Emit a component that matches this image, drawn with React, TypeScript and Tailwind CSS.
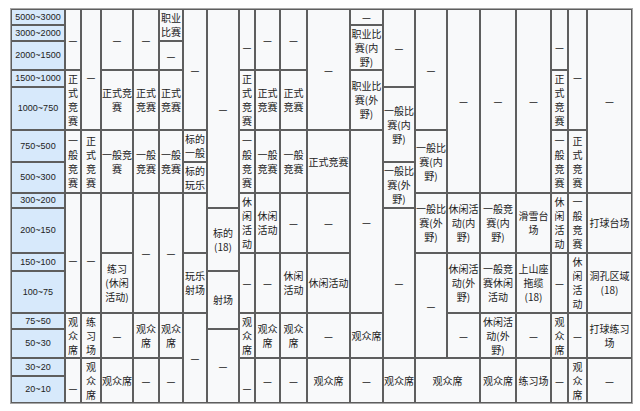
import React from "react";

// one column of the table, top to bottom: [rowSpan, lines, colSpan?]
type Span = { n: number; t: string[]; c?: number; skip?: boolean };

const D = "—";
const v = (s: string) => s.split("");
const s = (n: number, t: string | string[], c?: number): Span => ({
  n,
  t: typeof t === "string" ? [t] : t,
  c,
});
const skip = (n: number): Span => ({ n, t: [], skip: true });

const heads = [
  "5000~3000",
  "3000~2000",
  "2000~1500",
  "1500~1000",
  "1000~750",
  "750~500",
  "500~300",
  "300~200",
  "200~150",
  "150~100",
  "100~75",
  "75~50",
  "50~30",
  "30~20",
  "20~10",
];

const rowH = [
  "h-[16px]",
  "h-[16px]",
  "h-[29px]",
  "h-[17px]",
  "h-[43px]",
  "h-[32px]",
  "h-[31px]",
  "h-[15px]",
  "h-[45px]",
  "h-[18px]",
  "h-[42px]",
  "h-[16px]",
  "h-[29px]",
  "h-[18px]",
  "h-[27px]",
];

const columns: Span[][] = [
  // A
  [s(3, D), s(2, v("正式竞赛")), s(2, v("一般竞赛")), s(4, ["", D]), s(2, v("观众席")), s(2, ["", D])],
  // B
  [s(5, ["", D]), s(2, v("正式竞赛")), s(4, ["", D]), s(2, v("练习场")), s(2, v("观众席"))],
  // C
  [s(3, D), s(2, ["正式竞", "赛"]), s(2, ["一般竞", "赛"]), s(2, ""), s(2, ["练习", "(休闲", "活动)"]), s(2, D), s(2, "观众席")],
  // D
  [s(3, D), s(2, ["正式", "竞赛"]), s(2, ["一般", "竞赛"]), s(4, D), s(2, ["观众", "席"]), s(2, D)],
  // E
  [s(2, ["职业", "比赛"]), s(1, D), s(2, ["正式", "竞赛"]), s(2, ["一般", "竞赛"]), s(4, D), s(2, ["观众", "席"]), s(2, D)],
  // F
  [s(5, D), s(1, ["标的", "一般"]), s(1, ["标的", "玩乐"]), s(2, ""), s(2, ["玩乐", "射场"]), s(4, D)],
  // G
  [s(8, D), s(2, ["标的", "(18)"]), s(2, "射场"), s(3, D)],
  // H
  [s(3, ["", D]), s(2, v("正式竞赛")), s(2, v("一般竞赛")), s(2, v("休闲活动")), s(2, D), s(2, v("观众席")), s(2, ["", D])],
  // I
  [s(3, D), s(2, ["正式", "竞赛"]), s(2, ["一般", "竞赛"]), s(2, ["休闲", "活动"]), s(2, D), s(2, ["观众", "席"]), s(2, D)],
  // J
  [s(3, D), s(2, ["正式", "竞赛"]), s(2, ["一般", "竞赛"]), s(2, D), s(2, ["休闲", "活动"]), s(2, ["观众", "席"]), s(2, D)],
  // K
  [s(5, D), s(2, "正式竞赛"), s(2, D), s(2, "休闲活动"), s(2, D), s(2, "观众席")],
  // L
  [s(1, D), s(2, ["职业比", "赛(内", "野)"]), s(2, ["职业比", "赛(外", "野)"]), s(6, D), s(2, "观众席"), s(2, D)],
  // M
  [s(4, D), s(2, ["一般比", "赛(内", "野)"]), s(2, ["一般比", "赛(外", "野)"]), s(5, D), s(2, "观众席")],
  // N
  [s(5, D), s(2, ["一般比", "赛(内", "野)"]), s(2, ["一般比", "赛(外", "野)"]), s(4, D), s(2, "观众席", 2)],
  // O
  [s(7, D), s(2, ["休闲活", "动(内", "野)"]), s(2, ["休闲活", "动(外", "野)"]), s(2, D), skip(2)],
  // P
  [s(7, D), s(2, ["一般竞", "赛(内", "野)"]), s(2, ["一般竞", "赛休闲", "活动"]), s(2, ["休闲活", "动(外", "野)"]), s(2, "观众席")],
  // Q
  [s(7, D), s(2, ["滑雪台", "场"]), s(2, ["上山座", "拖缆", "(18)"]), s(2, D), s(2, "练习场")],
  // R
  [s(3, ["", D]), s(2, v("正式竞赛")), s(2, v("一般竞赛")), s(2, v("休闲活动")), s(2, D), s(2, v("观众席")), s(2, D)],
  // S
  [s(5, ["", D]), s(2, v("正式竞赛")), s(2, v("一般竞赛")), s(2, v("休闲活动")), s(2, D), s(2, v("观众席"))],
  // T
  [s(7, D), s(2, "打球台场"), s(2, ["洞孔区域", "(18)"]), s(2, ["打球练习", "场"]), s(2, D)],
];

// turn the column lists into per-row cell lists
const rows: Span[][] = heads.map(() => []);
columns.forEach((col) => {
  let r = 0;
  col.forEach((cl) => {
    if (!cl.skip) rows[r].push(cl);
    r += cl.n;
  });
});

function Lines({ t }: { t: string[] }) {
  return (
    <>
      {t.map((line, i) => (
        <React.Fragment key={i}>
          {i > 0 && <br />}
          {line === "" ? "\u00a0" : line}
        </React.Fragment>
      ))}
    </>
  );
}

export default function App() {
  return (
    <div className="min-h-screen bg-white pl-[10px] pt-[8px]">
      <table className="w-[623px] table-fixed border-separate border-spacing-0 border border-[#a7a7a7] bg-[#f8f9fa] font-['Noto_Sans_CJK_SC',sans-serif] text-[10px] leading-[14px] text-[#222]">
        <colgroup>
          <col className="w-[54px]" />
          <col className="w-[16px]" />
          <col className="w-[20px]" />
          <col className="w-[32px]" />
          <col className="w-[26px]" />
          <col className="w-[24px]" />
          <col className="w-[24px]" />
          <col className="w-[32px]" />
          <col className="w-[16px]" />
          <col className="w-[25px]" />
          <col className="w-[27px]" />
          <col className="w-[43px]" />
          <col className="w-[33px]" />
          <col className="w-[32px]" />
          <col className="w-[32px]" />
          <col className="w-[33px]" />
          <col className="w-[36px]" />
          <col className="w-[35px]" />
          <col className="w-[17px]" />
          <col className="w-[19px]" />
          <col className="w-[45px]" />
        </colgroup>
        <tbody>
          {rows.map((cells, ri) => (
            <tr key={ri} className={rowH[ri]}>
              <th className="border border-[#5e5e5e] bg-[#d7e9fb] p-0 text-center align-middle font-['Liberation_Sans',sans-serif] text-[9px] font-normal leading-[11px] text-[#222]">
                {heads[ri]}
              </th>
              {cells.map((cl, ci) => (
                <td
                  key={ci}
                  rowSpan={cl.n}
                  colSpan={cl.c}
                  className="overflow-hidden whitespace-nowrap border border-[#5e5e5e] p-0 text-center align-middle"
                >
                  <Lines t={cl.t} />
                </td>
              ))}
            </tr>
          ))}
        </tbody>
      </table>
    </div>
  );
}
